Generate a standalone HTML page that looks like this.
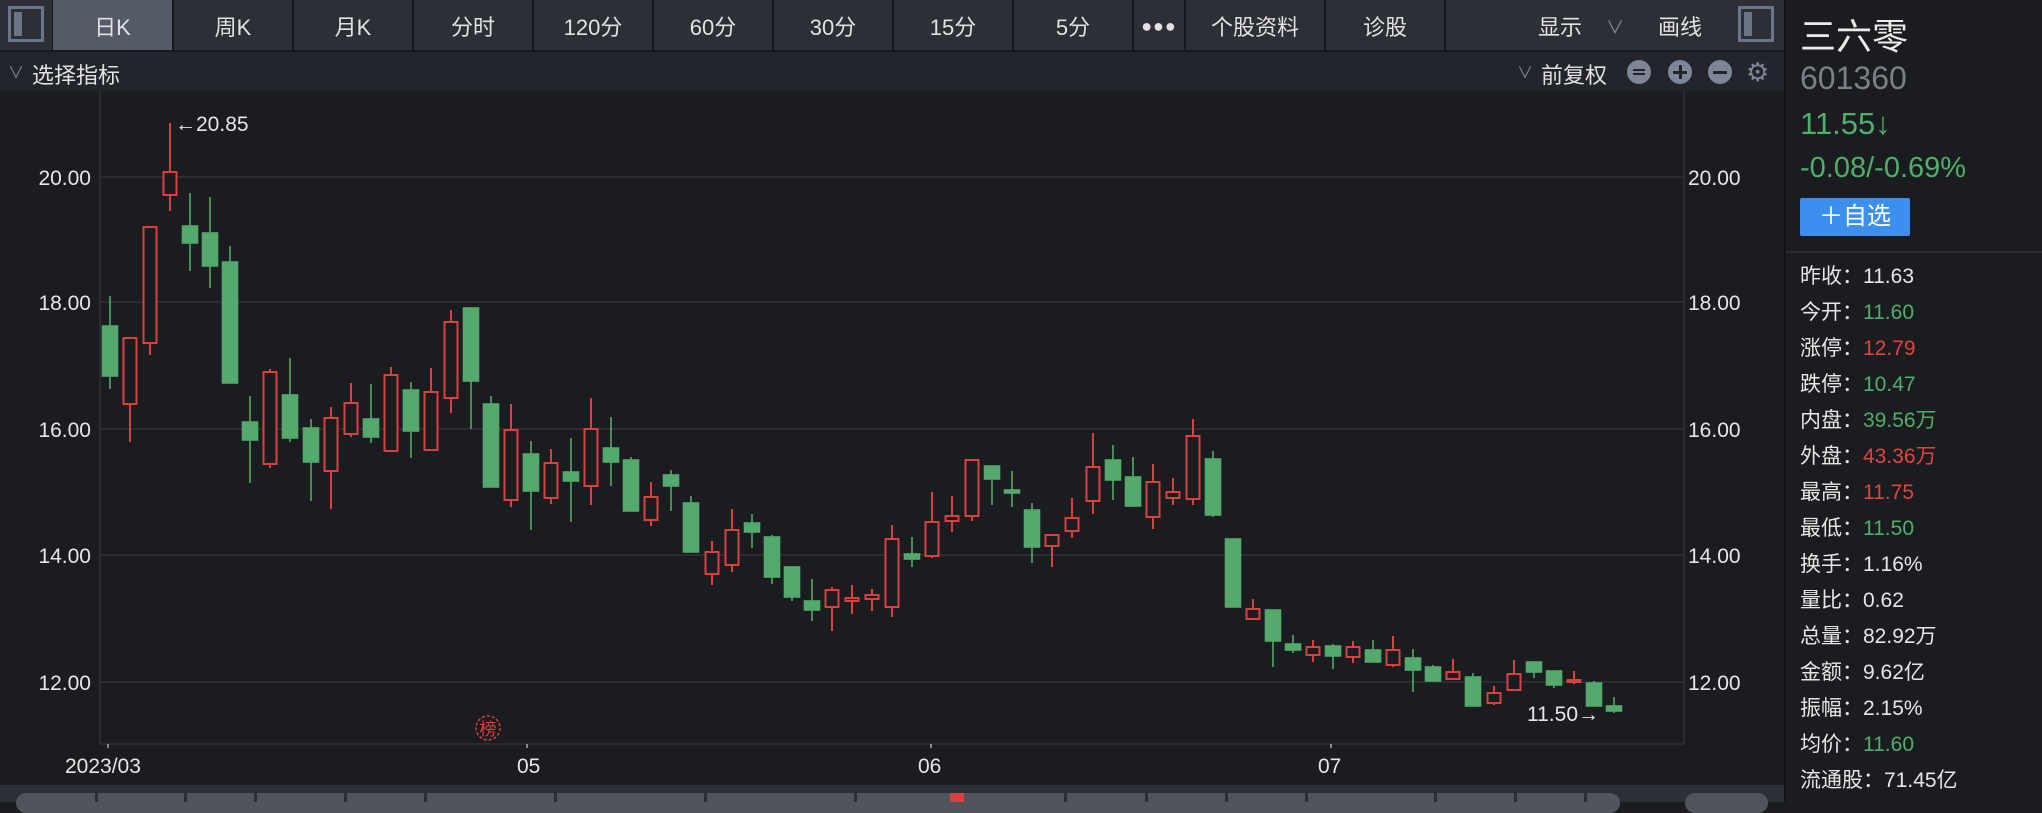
<!DOCTYPE html>
<html><head><meta charset="utf-8"><style>
*{margin:0;padding:0;box-sizing:border-box}
body{width:2042px;height:802px;background:#1b1c20;overflow:hidden;position:relative;font-family:"Liberation Sans","Noto Sans CJK SC",sans-serif;color:#e6e6e6}
.a{position:absolute}
.tab{position:absolute;top:0;height:50px;background:#2c2f36;font-size:22px;line-height:56px;text-align:center;color:#e2e2e2}
.row{position:absolute;left:1800px;font-size:21px;line-height:26px;color:#e6e6e6}
.g{color:#4fae6a}.r{color:#e0443f}
.ic{position:absolute;top:60px;width:24px;height:24px;border-radius:50%;background:#7d8596}
.sep{position:absolute;top:793px;width:3px;height:9px;background:#2c2f36}
</style></head><body>
<!-- top bar -->
<div class="a" style="left:0;top:0;width:1784px;height:52px;background:#17181b"></div>
<div class="tab" style="left:0;width:52px"></div>
<div class="a" style="left:8px;top:6px;width:36px;height:36px;border:3px solid #6b7587;background:#2c2f36"></div>
<div class="a" style="left:14px;top:12px;width:8px;height:24px;background:#6b7587"></div>
<div class="tab" style="left:53px;width:119px;background:#545b66">日K</div>
<div class="tab" style="left:174px;width:118px">周K</div>
<div class="tab" style="left:294px;width:118px">月K</div>
<div class="tab" style="left:414px;width:118px">分时</div>
<div class="tab" style="left:534px;width:118px">120分</div>
<div class="tab" style="left:654px;width:118px">60分</div>
<div class="tab" style="left:774px;width:118px">30分</div>
<div class="tab" style="left:894px;width:118px">15分</div>
<div class="tab" style="left:1014px;width:118px">5分</div>
<div class="tab" style="left:1134px;width:50px;font-size:18px;letter-spacing:1px;line-height:52px">●●●</div>
<div class="tab" style="left:1186px;width:138px">个股资料</div>
<div class="tab" style="left:1326px;width:118px">诊股</div>
<div class="tab" style="left:1446px;width:338px;text-align:left"><span style="position:absolute;left:92px">显示</span><span style="position:absolute;left:160px;color:#7d8596;font-size:18px">∨</span><span style="position:absolute;left:212px">画线</span></div>
<div class="a" style="left:1738px;top:6px;width:36px;height:36px;border:3px solid #6b7587;background:#2c2f36"></div>
<div class="a" style="left:1744px;top:12px;width:8px;height:24px;background:#6b7587"></div>
<!-- second row -->
<div class="a" style="left:0;top:52px;width:1784px;height:39px;background:#22252b"></div>
<div class="a" style="left:8px;top:59px;font-size:16px;color:#7d8596">∨</div>
<div class="a" style="left:32px;top:58px;font-size:22px;color:#e2e2e2">选择指标</div>
<div class="a" style="left:1517px;top:59px;font-size:16px;color:#7d8596">∨</div>
<div class="a" style="left:1541px;top:58px;font-size:22px;color:#e2e2e2">前复权</div>
<div class="ic" style="left:1627px"><div class="a" style="left:6px;top:9px;width:12px;height:2px;background:#22252b"></div><div class="a" style="left:6px;top:13px;width:12px;height:2px;background:#22252b"></div></div>
<div class="ic" style="left:1668px"><div class="a" style="left:5px;top:11px;width:14px;height:3px;background:#22252b"></div><div class="a" style="left:10.5px;top:5px;width:3px;height:14px;background:#22252b"></div></div>
<div class="ic" style="left:1708px"><div class="a" style="left:5px;top:11px;width:14px;height:3px;background:#22252b"></div></div>
<div class="a" style="left:1746px;top:59px;font-size:26px;line-height:26px;color:#7d8596">⚙</div>
<!-- chart -->
<svg class="a" style="left:0;top:0" width="1784" height="802">
<g stroke="#2a2c31" stroke-width="2">
<line x1="100" y1="177" x2="1684" y2="177"/><line x1="100" y1="302" x2="1684" y2="302"/><line x1="100" y1="429" x2="1684" y2="429"/><line x1="100" y1="555" x2="1684" y2="555"/><line x1="100" y1="682" x2="1684" y2="682"/>
<line x1="100" y1="91" x2="100" y2="744"/><line x1="1684" y1="91" x2="1684" y2="744"/><line x1="100" y1="744" x2="1684" y2="744"/>
</g>
<g stroke="#888" stroke-width="2"><line x1="108" y1="744" x2="108" y2="748"/><line x1="527" y1="744" x2="527" y2="748"/><line x1="931" y1="744" x2="931" y2="748"/><line x1="1331" y1="744" x2="1331" y2="748"/></g>
<g font-size="21" fill="#e6e6e6" font-family="Liberation Sans, sans-serif">
<text x="91" y="185" text-anchor="end">20.00</text><text x="91" y="310" text-anchor="end">18.00</text><text x="91" y="437" text-anchor="end">16.00</text><text x="91" y="563" text-anchor="end">14.00</text><text x="91" y="690" text-anchor="end">12.00</text>
<text x="1688" y="185">20.00</text><text x="1688" y="310">18.00</text><text x="1688" y="437">16.00</text><text x="1688" y="563">14.00</text><text x="1688" y="690">12.00</text>
<text x="65" y="773">2023/03</text><text x="517" y="773">05</text><text x="918" y="773">06</text><text x="1318" y="773">07</text>
<text x="175" y="131">←20.85</text><text x="1527" y="721">11.50→</text>
</g>
<g transform="translate(488,728)"><circle r="12" fill="none" stroke="#d9413f" stroke-width="1.5" stroke-dasharray="3 2"/><text y="7" text-anchor="middle" font-size="17" fill="#d9413f" font-family="Noto Sans CJK SC, sans-serif">榜</text></g>
</svg>
<svg class="a" style="left:0;top:0" width="1784" height="802">
<g stroke="#54a96c" fill="#54a96c" stroke-width="1.6">
<line x1="110" y1="296" x2="110" y2="389"/><rect x="102.5" y="326" width="15" height="50"/>
<line x1="190" y1="193" x2="190" y2="271"/><rect x="182.5" y="226" width="15" height="17"/>
<line x1="210" y1="197" x2="210" y2="288"/><rect x="202.5" y="233" width="15" height="33"/>
<line x1="230" y1="246" x2="230" y2="383"/><rect x="222.5" y="262" width="15" height="121"/>
<line x1="250" y1="396" x2="250" y2="483"/><rect x="242.5" y="422" width="15" height="18"/>
<line x1="290" y1="358" x2="290" y2="442"/><rect x="282.5" y="395" width="15" height="43"/>
<line x1="311" y1="419" x2="311" y2="501"/><rect x="303.5" y="428" width="15" height="34"/>
<line x1="371" y1="384" x2="371" y2="443"/><rect x="363.5" y="419" width="15" height="18"/>
<line x1="411" y1="382" x2="411" y2="458"/><rect x="403.5" y="390" width="15" height="41"/>
<line x1="471" y1="308" x2="471" y2="429"/><rect x="463.5" y="308" width="15" height="73"/>
<line x1="491" y1="396" x2="491" y2="487"/><rect x="483.5" y="404" width="15" height="83"/>
<line x1="531" y1="441" x2="531" y2="530"/><rect x="523.5" y="454" width="15" height="37"/>
<line x1="571" y1="438" x2="571" y2="522"/><rect x="563.5" y="472" width="15" height="9"/>
<line x1="611" y1="417" x2="611" y2="486"/><rect x="603.5" y="448" width="15" height="14"/>
<line x1="631" y1="457" x2="631" y2="511"/><rect x="623.5" y="460" width="15" height="51"/>
<line x1="671" y1="470" x2="671" y2="511"/><rect x="663.5" y="475" width="15" height="11"/>
<line x1="691" y1="496" x2="691" y2="552"/><rect x="683.5" y="503" width="15" height="49"/>
<line x1="752" y1="514" x2="752" y2="548"/><rect x="744.5" y="523" width="15" height="9"/>
<line x1="772" y1="535" x2="772" y2="584"/><rect x="764.5" y="537" width="15" height="40"/>
<line x1="792" y1="566" x2="792" y2="601"/><rect x="784.5" y="567" width="15" height="30"/>
<line x1="812" y1="579" x2="812" y2="621"/><rect x="804.5" y="601" width="15" height="9"/>
<line x1="912" y1="537" x2="912" y2="567"/><rect x="904.5" y="554" width="15" height="5"/>
<line x1="992" y1="466" x2="992" y2="505"/><rect x="984.5" y="466" width="15" height="13"/>
<line x1="1012" y1="471" x2="1012" y2="507"/><rect x="1004.5" y="490" width="15" height="3"/>
<line x1="1032" y1="503" x2="1032" y2="563"/><rect x="1024.5" y="510" width="15" height="37"/>
<line x1="1113" y1="445" x2="1113" y2="500"/><rect x="1105.5" y="460" width="15" height="20"/>
<line x1="1133" y1="457" x2="1133" y2="507"/><rect x="1125.5" y="477" width="15" height="29"/>
<line x1="1213" y1="451" x2="1213" y2="517"/><rect x="1205.5" y="459" width="15" height="56"/>
<rect x="1225.5" y="539" width="15" height="68"/>
<line x1="1273" y1="610" x2="1273" y2="667"/><rect x="1265.5" y="610" width="15" height="31"/>
<line x1="1293" y1="635" x2="1293" y2="653"/><rect x="1285.5" y="644" width="15" height="6"/>
<line x1="1333" y1="644" x2="1333" y2="669"/><rect x="1325.5" y="646" width="15" height="10"/>
<line x1="1373" y1="640" x2="1373" y2="662"/><rect x="1365.5" y="650" width="15" height="12"/>
<line x1="1413" y1="649" x2="1413" y2="692"/><rect x="1405.5" y="658" width="15" height="12"/>
<line x1="1433" y1="665" x2="1433" y2="681"/><rect x="1425.5" y="667" width="15" height="14"/>
<line x1="1473" y1="673" x2="1473" y2="706"/><rect x="1465.5" y="677" width="15" height="29"/>
<line x1="1534" y1="662" x2="1534" y2="678"/><rect x="1526.5" y="662" width="15" height="10"/>
<line x1="1554" y1="671" x2="1554" y2="688"/><rect x="1546.5" y="671" width="15" height="14"/>
<line x1="1594" y1="681" x2="1594" y2="706"/><rect x="1586.5" y="683" width="15" height="23"/>
<line x1="1614" y1="697" x2="1614" y2="713"/><rect x="1606.5" y="706" width="15" height="5"/>
</g>
<g stroke="#d9413f" fill="#1b1c20" stroke-width="2">
<line x1="130" y1="338" x2="130" y2="442"/><rect x="123.5" y="338" width="13" height="66"/>
<line x1="150" y1="227" x2="150" y2="355"/><rect x="143.5" y="227" width="13" height="116"/>
<line x1="170" y1="123" x2="170" y2="211"/><rect x="163.5" y="172" width="13" height="23"/>
<line x1="270" y1="369" x2="270" y2="468"/><rect x="263.5" y="372" width="13" height="92"/>
<line x1="331" y1="407" x2="331" y2="509"/><rect x="324.5" y="418" width="13" height="53"/>
<line x1="351" y1="383" x2="351" y2="437"/><rect x="344.5" y="403" width="13" height="31"/>
<line x1="391" y1="367" x2="391" y2="452"/><rect x="384.5" y="375" width="13" height="76"/>
<line x1="431" y1="368" x2="431" y2="450"/><rect x="424.5" y="392" width="13" height="58"/>
<line x1="451" y1="310" x2="451" y2="413"/><rect x="444.5" y="322" width="13" height="76"/>
<line x1="511" y1="404" x2="511" y2="507"/><rect x="504.5" y="430" width="13" height="70"/>
<line x1="551" y1="449" x2="551" y2="504"/><rect x="544.5" y="463" width="13" height="35"/>
<line x1="591" y1="398" x2="591" y2="505"/><rect x="584.5" y="429" width="13" height="57"/>
<line x1="651" y1="482" x2="651" y2="526"/><rect x="644.5" y="497" width="13" height="23"/>
<line x1="712" y1="541" x2="712" y2="585"/><rect x="705.5" y="552" width="13" height="22"/>
<line x1="732" y1="509" x2="732" y2="572"/><rect x="725.5" y="530" width="13" height="35"/>
<line x1="832" y1="587" x2="832" y2="631"/><rect x="825.5" y="590" width="13" height="17"/>
<line x1="852" y1="585" x2="852" y2="614"/><rect x="845.5" y="598" width="13" height="3"/>
<line x1="872" y1="589" x2="872" y2="611"/><rect x="865.5" y="595" width="13" height="4"/>
<line x1="892" y1="525" x2="892" y2="617"/><rect x="885.5" y="539" width="13" height="68"/>
<line x1="932" y1="492" x2="932" y2="558"/><rect x="925.5" y="522" width="13" height="34"/>
<line x1="952" y1="496" x2="952" y2="532"/><rect x="945.5" y="516" width="13" height="5"/>
<line x1="972" y1="460" x2="972" y2="521"/><rect x="965.5" y="460" width="13" height="56"/>
<line x1="1052" y1="534" x2="1052" y2="567"/><rect x="1045.5" y="535" width="13" height="11"/>
<line x1="1072" y1="498" x2="1072" y2="538"/><rect x="1065.5" y="518" width="13" height="13"/>
<line x1="1093" y1="433" x2="1093" y2="514"/><rect x="1086.5" y="467" width="13" height="34"/>
<line x1="1153" y1="464" x2="1153" y2="529"/><rect x="1146.5" y="482" width="13" height="35"/>
<line x1="1173" y1="478" x2="1173" y2="505"/><rect x="1166.5" y="492" width="13" height="6"/>
<line x1="1193" y1="419" x2="1193" y2="505"/><rect x="1186.5" y="436" width="13" height="63"/>
<line x1="1253" y1="599" x2="1253" y2="619"/><rect x="1246.5" y="609" width="13" height="10"/>
<line x1="1313" y1="640" x2="1313" y2="662"/><rect x="1306.5" y="647" width="13" height="8"/>
<line x1="1353" y1="641" x2="1353" y2="663"/><rect x="1346.5" y="647" width="13" height="10"/>
<line x1="1393" y1="636" x2="1393" y2="667"/><rect x="1386.5" y="650" width="13" height="15"/>
<line x1="1453" y1="659" x2="1453" y2="679"/><rect x="1446.5" y="672" width="13" height="7"/>
<line x1="1494" y1="686" x2="1494" y2="705"/><rect x="1487.5" y="693" width="13" height="10"/>
<line x1="1514" y1="660" x2="1514" y2="690"/><rect x="1507.5" y="674" width="13" height="16"/>
<line x1="1574" y1="671" x2="1574" y2="684"/><rect x="1567.5" y="680" width="13" height="2"/>
</g>
</svg>
<!-- bottom toolbar -->
<div class="a" style="left:0;top:785px;width:1784px;height:17px;background:#2c2f36"></div>
<div class="a" style="left:16px;top:793px;width:1604px;height:20px;border-radius:10px;background:#4f545d"></div>
<div class="sep" style="left:95px"></div><div class="sep" style="left:184px"></div><div class="sep" style="left:254px"></div><div class="sep" style="left:344px"></div><div class="sep" style="left:424px"></div><div class="sep" style="left:554px"></div><div class="sep" style="left:704px"></div><div class="sep" style="left:854px"></div><div class="sep" style="left:1064px"></div><div class="sep" style="left:1145px"></div><div class="sep" style="left:1225px"></div><div class="sep" style="left:1305px"></div><div class="sep" style="left:1434px"></div><div class="sep" style="left:1514px"></div><div class="sep" style="left:1584px"></div>
<div class="a" style="left:950px;top:793px;width:14px;height:9px;background:#d9413f"></div>
<div class="a" style="left:1685px;top:793px;width:83px;height:20px;border-radius:10px;background:#4f545d"></div>
<!-- right panel -->
<div class="a" style="left:1784px;top:0;width:2px;height:802px;background:#111214"></div>
<div class="a" style="left:1800px;top:8px;font-size:36px;color:#ececec">三六零</div>
<div class="a" style="left:1800px;top:60px;font-size:32px;color:#7b7f87">601360</div>
<div class="a g" style="left:1800px;top:106px;font-size:31px">11.55↓</div>
<div class="a g" style="left:1800px;top:152px;font-size:29px">-0.08/-0.69%</div>
<div class="a" style="left:1800px;top:198px;width:110px;height:38px;background:#3d8fef;border-radius:2px;color:#fff;font-size:24px;line-height:38px;text-align:center">＋自选</div>
<div class="a" style="left:1786px;top:251px;width:256px;height:2px;background:#2a2c31"></div>
<div class="row" style="top:264px">昨收：11.63</div>
<div class="row" style="top:300px">今开：<span class="g">11.60</span></div>
<div class="row" style="top:336px">涨停：<span class="r">12.79</span></div>
<div class="row" style="top:372px">跌停：<span class="g">10.47</span></div>
<div class="row" style="top:408px">内盘：<span class="g">39.56万</span></div>
<div class="row" style="top:444px">外盘：<span class="r">43.36万</span></div>
<div class="row" style="top:480px">最高：<span class="r">11.75</span></div>
<div class="row" style="top:516px">最低：<span class="g">11.50</span></div>
<div class="row" style="top:552px">换手：1.16%</div>
<div class="row" style="top:588px">量比：0.62</div>
<div class="row" style="top:624px">总量：82.92万</div>
<div class="row" style="top:660px">金额：9.62亿</div>
<div class="row" style="top:696px">振幅：2.15%</div>
<div class="row" style="top:732px">均价：<span class="g">11.60</span></div>
<div class="row" style="top:768px">流通股：71.45亿</div>
</body></html>
